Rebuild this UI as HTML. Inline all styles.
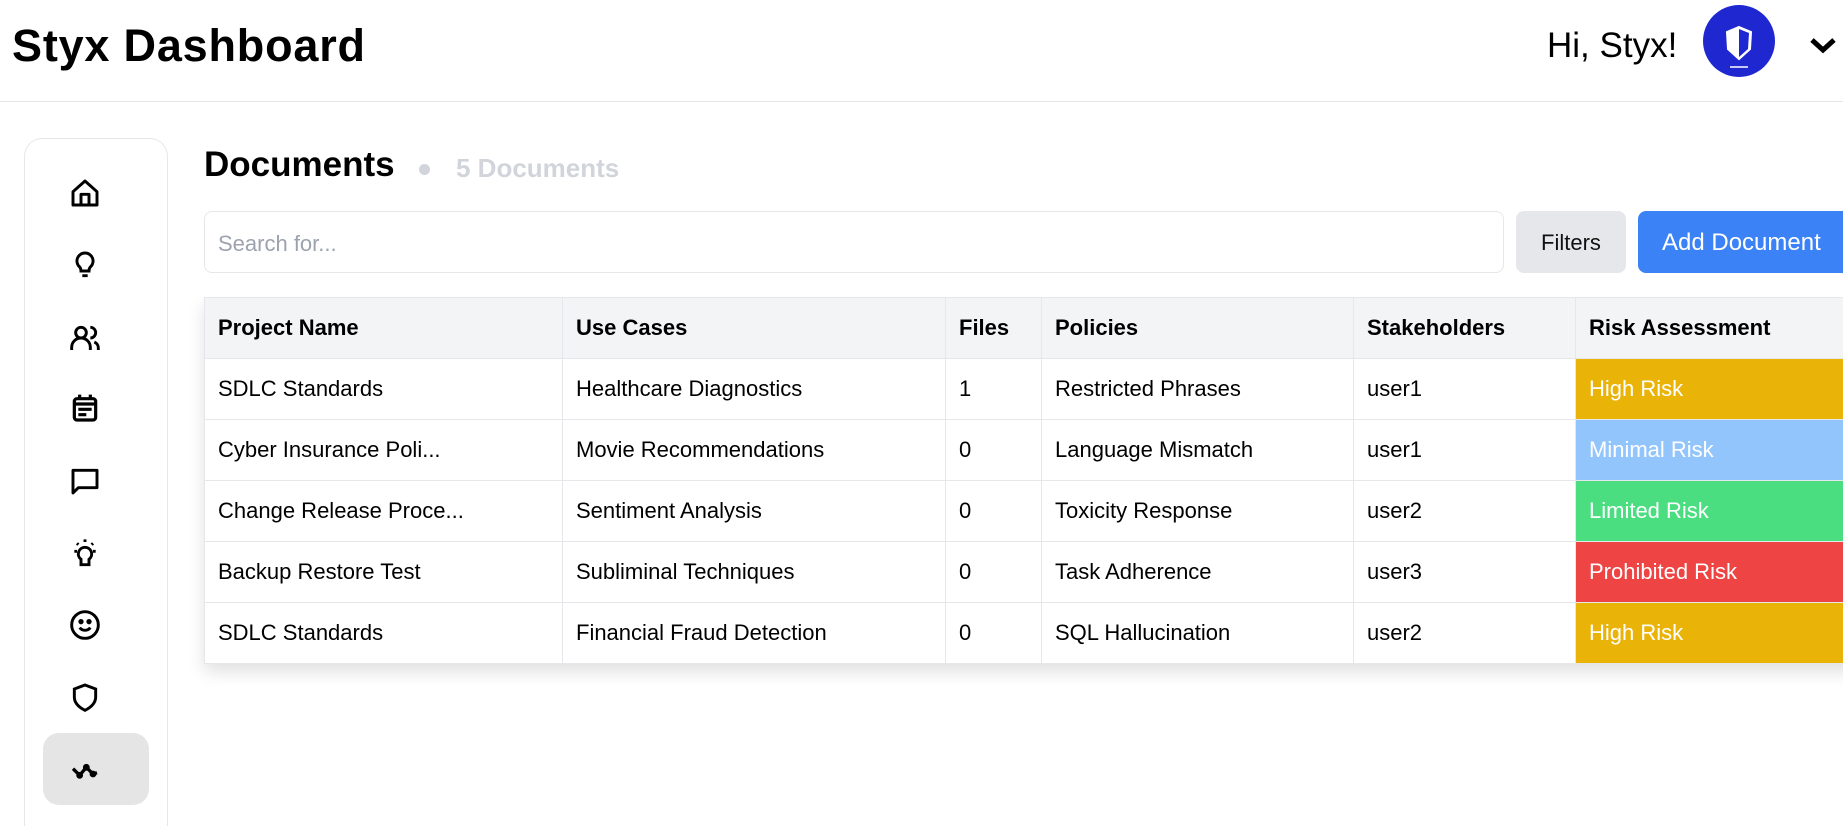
<!DOCTYPE html>
<html style="height:826px;overflow:hidden"><head><style>
*{box-sizing:border-box;margin:0;padding:0}
body{width:1843px;height:826px;overflow:hidden;background:#fff;font-family:"Liberation Sans",sans-serif;color:#000;position:relative}
.hdr{position:absolute;left:0;top:0;width:1843px;height:102px;border-bottom:1px solid #e5e7eb}
.title{position:absolute;left:12px;top:20px;font-size:45px;font-weight:bold;letter-spacing:0.8px}
.hi{position:absolute;left:1547px;top:26px;font-size:35px}
.av{position:absolute;left:1703px;top:5px;width:72px;height:72px;border-radius:50%;background:#1f27d1}
.side{position:absolute;left:24px;top:138px;width:144px;height:688px;border:1px solid #e5e7eb;border-bottom:none;border-radius:18px 18px 0 0}
.ic{position:absolute;left:69px;width:32px;height:32px}
.act{position:absolute;left:43px;top:733px;width:106px;height:72px;background:#e5e5e5;border-radius:16px}
h1{position:absolute;left:204px;top:145px;font-size:35px;font-weight:bold}
.dot{position:absolute;left:419px;top:164px;width:11px;height:11px;border-radius:50%;background:#d1d5db}
.cnt{position:absolute;left:456px;top:153px;font-size:26px;font-weight:bold;color:#d1d5db}
.search{position:absolute;left:204px;top:211px;width:1300px;height:62px;border:1px solid #e5e7eb;border-radius:8px;font-size:22px;color:#9ca3af;padding:19px 13px}
.filt{position:absolute;left:1516px;top:211px;width:110px;height:62px;background:#e5e7eb;border-radius:8px;font-size:22px;text-align:center;line-height:64px;color:#111}
.add{position:absolute;left:1638px;top:211px;width:205px;height:62px;background:#3b82f6;border-radius:8px 0 0 8px;font-size:24px;color:#fff;line-height:64px;padding-left:24px;white-space:nowrap;overflow:hidden}
.tw{position:absolute;left:184px;top:297px;width:1659px;height:440px;overflow:hidden;padding-left:20px}
table{border-collapse:collapse;width:1700px;box-shadow:0 8px 16px rgba(0,0,0,.12);font-size:22px}
td,th{height:61px;border:1px solid #e5e7eb;padding:0 13px;text-align:left;white-space:nowrap}
th{background:#f3f4f6;font-weight:bold}
.r{color:#fff}
</style></head><body>
<div class="hdr">
<div class="title">Styx Dashboard</div>
<div class="hi">Hi, Styx!</div>
<div class="av"><svg width="72" height="72" viewBox="0 0 72 72"><path d="M36 22 L48 27 L47 44 L36 54 L25 44 L24 27 Z" fill="#fff" stroke="#fff" stroke-width="2"/><path d="M36 24 L46 28 L45 44 L36 52 Z" fill="#1f27d1"/><line x1="27" y1="62" x2="45" y2="62" stroke="#fff" stroke-width="1.5"/></svg></div>
<svg style="position:absolute;left:1808px;top:36px" width="30" height="20" viewBox="0 0 30 20"><path d="M4 4 L15 14 L26 4" fill="none" stroke="#000" stroke-width="5"/></svg>
</div>
<div class="side"></div>
<div class="act"></div>
<svg class="ic" style="top:177px" viewBox="0 0 24 24" fill="none" stroke="#000" stroke-width="2.2" stroke-linejoin="round"><path d="M3 11 L12 3 L21 11 V21 H3 Z M9 21 V13 H15 V21"/></svg>
<svg class="ic" style="top:249px" viewBox="0 0 24 24" fill="none" stroke="#000" stroke-width="2.2"><path d="M12 3a6 6 0 0 0-4 10.5c1 1 1 2 1 3h6c0-1 0-2 1-3A6 6 0 0 0 12 3zM10 20h4"/></svg>
<svg class="ic" style="top:322px" viewBox="0 0 24 24" fill="none" stroke="#000" stroke-width="2.2"><circle cx="9" cy="8" r="4"/><path d="M2 21v-2a6 6 0 0 1 14 0v2M16 4a4 4 0 0 1 0 8M19 15a5 5 0 0 1 3 5v1"/></svg>
<svg class="ic" style="top:392px" viewBox="0 0 24 24" fill="none" stroke="#000" stroke-width="2.4"><rect x="4" y="5" width="16" height="16" rx="2"/><path d="M4 9h16M8 2v4M16 2v4M7 13h10M7 17h6"/></svg>
<svg class="ic" style="top:465px" viewBox="0 0 24 24" fill="none" stroke="#000" stroke-width="2.2"><path d="M3 4h18v13H7l-4 4z" stroke-linejoin="round"/></svg>
<svg class="ic" style="top:538px" viewBox="0 0 24 24" fill="none" stroke="#000" stroke-width="2.2"><path d="M12 7a5 5 0 0 0-3 9v4h6v-4a5 5 0 0 0-3-9zM12 1v2M4 10h2M18 10h2M6 4l1 1M18 4l-1 1"/></svg>
<svg class="ic" style="top:609px" viewBox="0 0 24 24" fill="none" stroke="#000" stroke-width="2.2"><circle cx="12" cy="12" r="10"/><path d="M8 14a5 5 0 0 0 8 0"/><circle cx="9" cy="9.5" r=".9" fill="#000"/><circle cx="15" cy="9.5" r=".9" fill="#000"/></svg>
<svg class="ic" style="top:681px" viewBox="0 0 24 24" fill="none" stroke="#000" stroke-width="2.2"><path d="M12 3l8 3v6c0 5-4 8-8 10-4-2-8-5-8-10V6z"/></svg>
<svg class="ic" style="top:754px" viewBox="0 0 24 24" fill="none" stroke="#000" stroke-width="2.5" stroke-linejoin="round"><path d="M3 11l5 5 5-6 5 5 3-1"/><circle cx="8" cy="16" r="1.3" fill="#000"/><circle cx="13" cy="10" r="1.3" fill="#000"/><circle cx="18" cy="15" r="1.3" fill="#000"/></svg>
<h1>Documents</h1><div class="dot"></div><div class="cnt">5 Documents</div>
<div class="search">Search for...</div>
<div class="filt">Filters</div>
<div class="add">Add Document</div>
<div class="tw">
<table>
<colgroup><col style="width:358px"><col style="width:383px"><col style="width:96px"><col style="width:312px"><col style="width:222px"><col></colgroup>
<tr><th>Project Name</th><th>Use Cases</th><th>Files</th><th>Policies</th><th>Stakeholders</th><th>Risk Assessment</th></tr>
<tr><td>SDLC Standards</td><td>Healthcare Diagnostics</td><td>1</td><td>Restricted Phrases</td><td>user1</td><td class="r" style="background:#eab308">High Risk</td></tr>
<tr><td>Cyber Insurance Poli...</td><td>Movie Recommendations</td><td>0</td><td>Language Mismatch</td><td>user1</td><td class="r" style="background:#93c5fd">Minimal Risk</td></tr>
<tr><td>Change Release Proce...</td><td>Sentiment Analysis</td><td>0</td><td>Toxicity Response</td><td>user2</td><td class="r" style="background:#4ade80">Limited Risk</td></tr>
<tr><td>Backup Restore Test</td><td>Subliminal Techniques</td><td>0</td><td>Task Adherence</td><td>user3</td><td class="r" style="background:#ef4444">Prohibited Risk</td></tr>
<tr><td>SDLC Standards</td><td>Financial Fraud Detection</td><td>0</td><td>SQL Hallucination</td><td>user2</td><td class="r" style="background:#eab308">High Risk</td></tr>
</table>
</div>
</body></html>
